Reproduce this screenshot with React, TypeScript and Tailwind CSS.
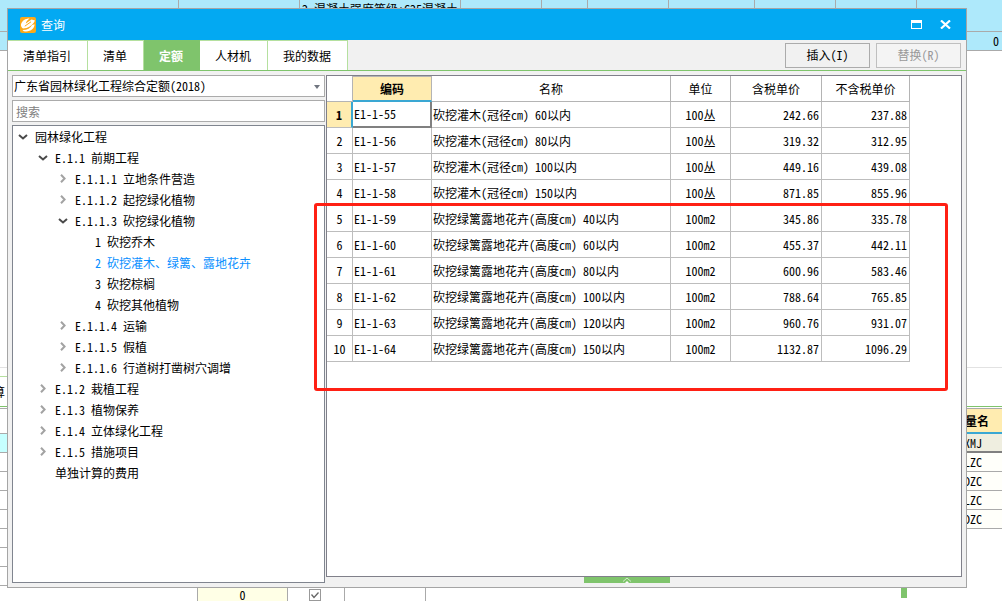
import React, { useState } from "react";
import clsx from "clsx";

type TreeItem = {
  label: string;
  level: number;
  state?: "open" | "closed";
};

const tabs = ["清单指引", "清单", "定额", "人材机", "我的数据"];

const tree: TreeItem[] = [
  { label: "园林绿化工程", level: 0, state: "open" },
  { label: "E.1.1 前期工程", level: 1, state: "open" },
  { label: "E.1.1.1 立地条件营造", level: 2, state: "closed" },
  { label: "E.1.1.2 起挖绿化植物", level: 2, state: "closed" },
  { label: "E.1.1.3 砍挖绿化植物", level: 2, state: "open" },
  { label: "1 砍挖乔木", level: 3 },
  { label: "2 砍挖灌木、绿篱、露地花卉", level: 3 },
  { label: "3 砍挖棕榈", level: 3 },
  { label: "4 砍挖其他植物", level: 3 },
  { label: "E.1.1.4 运输", level: 2, state: "closed" },
  { label: "E.1.1.5 假植", level: 2, state: "closed" },
  { label: "E.1.1.6 行道树打凿树穴调增", level: 2, state: "closed" },
  { label: "E.1.2 栽植工程", level: 1, state: "closed" },
  { label: "E.1.3 植物保养", level: 1, state: "closed" },
  { label: "E.1.4 立体绿化工程", level: 1, state: "closed" },
  { label: "E.1.5 措施项目", level: 1, state: "closed" },
  { label: "单独计算的费用", level: 1 },
];

const indents = ["pl-0", "pl-5", "pl-10", "pl-15"];

const rows = [
  ["E1-1-55", "砍挖灌木(冠径㎝) 60以内", "100丛", "242.66", "237.88"],
  ["E1-1-56", "砍挖灌木(冠径㎝) 80以内", "100丛", "319.32", "312.95"],
  ["E1-1-57", "砍挖灌木(冠径㎝) 100以内", "100丛", "449.16", "439.08"],
  ["E1-1-58", "砍挖灌木(冠径㎝) 150以内", "100丛", "871.85", "855.96"],
  ["E1-1-59", "砍挖绿篱露地花卉(高度㎝) 40以内", "100m2", "345.86", "335.78"],
  ["E1-1-60", "砍挖绿篱露地花卉(高度㎝) 60以内", "100m2", "455.37", "442.11"],
  ["E1-1-61", "砍挖绿篱露地花卉(高度㎝) 80以内", "100m2", "600.96", "583.46"],
  ["E1-1-62", "砍挖绿篱露地花卉(高度㎝) 100以内", "100m2", "788.64", "765.85"],
  ["E1-1-63", "砍挖绿篱露地花卉(高度㎝) 120以内", "100m2", "960.76", "931.07"],
  ["E1-1-64", "砍挖绿篱露地花卉(高度㎝) 150以内", "100m2", "1132.87", "1096.29"],
];

const Chevron = ({ state }: { state: "open" | "closed" }) =>
  state === "open" ? (
    <svg width="10" height="6" viewBox="0 0 10 6" fill="none">
      <path d="M1 1l4 3.5L9 1" stroke="#4a4a4a" strokeWidth="2" />
    </svg>
  ) : (
    <svg width="6" height="9" viewBox="0 0 6 9" fill="none">
      <path d="M1 .7l3.6 3.8L1 8.3" stroke="#a3a3a3" strokeWidth="2" />
    </svg>
  );

const Logo = () => (
  <svg width="16" height="16" viewBox="0 0 16 16" fill="none">
    <rect width="16" height="16" rx="2" fill="#fba919" />
    <path
      d="M1 7.500C2 3.500 5.500 1.500 9.500 1.500 7.500 3 6 4.800 5.800 6.600L11.500 2.600 15 3.400C13.500 6.800 10.500 9.600 6.500 11L3 11.500C1.600 10.600.8 9.200 1 7.500z"
      fill="#fff"
    />
    <path
      d="M14.500 7.200c.2 4-3.500 7-8.300 7.300-1.800 0-3-.5-3.600-1.500C7.400 13 10.600 11 12 8z"
      fill="#fff"
    />
    <path d="M4.800 9.200L11 4.800" stroke="#fba919" />
  </svg>
);

const TitleBar = () => (
  <header className="flex h-[31px] shrink-0 items-center bg-[#03a9f2] pr-[15px] pl-3 text-white">
    <Logo />
    <h1 className="flex-1 pl-[5px]">查询</h1>
    <div className="flex items-center gap-[18px]">
      <button aria-label="最大化">
        <svg width="11" height="9" viewBox="0 0 11 9">
          <path d="M0 0h11v9H0zM1 3v5h9V3z" fill="#fff" fillRule="evenodd" />
        </svg>
      </button>
      <button aria-label="关闭">
        <svg width="11" height="9" viewBox="0 0 11 9">
          <path d="M1 .5l9 8M10 .5l-9 8" stroke="#fff" strokeWidth="2.200" />
        </svg>
      </button>
    </div>
  </header>
);

const TabBar = () => {
  const [active, setActive] = useState("定额");

  return (
    <div className="flex h-[31px] shrink-0 items-stretch border-b border-[#7fc46c]">
      <nav className="flex">
        {tabs.map((tab) => (
          <button
            key={tab}
            onClick={() => setActive(tab)}
            className={clsx(
              "border-t border-r px-[15px] pr-4 whitespace-nowrap",
              tab === active
                ? "border-[#7fc46c] bg-[#7fc46c] font-bold text-white"
                : "border-[#b5e09f] bg-white"
            )}
          >
            {tab}
          </button>
        ))}
      </nav>
      <div className="flex flex-1 items-center justify-end gap-[6px] pr-[5px]">
        <button className="h-[25px] w-[85px] border border-[#ababab] bg-[#f1f1f1]">
          插入(I)
        </button>
        <button
          disabled
          className="h-[25px] w-[85px] border border-[#bfbfbf] bg-[#f4f4f4] text-[#999]"
        >
          替换(R)
        </button>
      </div>
    </div>
  );
};

const Sidebar = () => (
  <aside className="flex w-[313px] shrink-0 flex-col gap-[3px]">
    <div className="relative">
      <select
        aria-label="定额库"
        className="h-[22px] w-full appearance-none border border-[#ababab] bg-white pl-px"
      >
        <option>广东省园林绿化工程综合定额(2018)</option>
      </select>
      <svg
        className="pointer-events-none absolute top-[10px] right-[5px]"
        width="6"
        height="4"
        viewBox="0 0 6 4"
      >
        <path d="M0 0h6L3 4z" fill="#70757f" />
      </svg>
    </div>
    <input
      type="text"
      aria-label="搜索"
      placeholder="搜索"
      className="h-[22px] w-full border border-[#ababab] bg-white px-[3px] placeholder:text-[#808080]"
    />
    <ul className="flex-1 border border-[#80858f] bg-white">
      {tree.map((item) => (
        <li
          key={item.label}
          className={clsx(
            "flex h-[21px] items-center gap-[2px] whitespace-nowrap",
            indents[item.level],
            item.label.startsWith("2 ") && "text-[#0a8fff]"
          )}
        >
          <span className="flex w-5 justify-center">
            {item.state && <Chevron state={item.state} />}
          </span>
          {item.label}
        </li>
      ))}
    </ul>
  </aside>
);

const QuotaTable = () => (
  <table className="w-[583px] table-fixed border-separate border-spacing-0">
    <colgroup>
      <col className="w-[26px]" />
      <col className="w-[79px]" />
      <col className="w-[239px]" />
      <col className="w-[60px]" />
      <col className="w-[91px]" />
      <col className="w-[88px]" />
    </colgroup>
    <thead>
      <tr className="*:h-[26px] *:border-[#b4b4b4] *:p-0 *:font-normal">
        <td className="border-r border-b" />
        <th className="border-t border-r border-b-2 border-b-[#3aa7d3]! bg-[#ffecb0] font-bold!">
          编码
        </th>
        <th className="border-r border-b">名称</th>
        <th className="border-r border-b">单位</th>
        <th className="border-r border-b">含税单价</th>
        <th className="border-r border-b">不含税单价</th>
      </tr>
    </thead>
    <tbody>
      {rows.map(([code, name, unit, taxed, untaxed], i) => (
        <tr
          key={code}
          className="*:h-[26px] *:border-[#bdbdbd] *:py-0 *:whitespace-nowrap"
        >
          <th
            className={clsx(
              "border-b px-0",
              i === 0
                ? "border-r-2 border-r-[#3aa7d3]! bg-[#ffecb0] font-bold"
                : "border-r font-normal"
            )}
          >
            {i + 1}
          </th>
          <td
            className={clsx(
              "px-px",
              i === 0
                ? "border-r-2 border-b-2 border-[#808080]!"
                : "border-r border-b"
            )}
          >
            {code}
          </td>
          <td className="border-r border-b px-px">{name}</td>
          <td className="border-r border-b px-0 text-center">{unit}</td>
          <td className="border-r border-b px-[2px] text-right">{taxed}</td>
          <td className="border-r border-b px-[2px] text-right">{untaxed}</td>
        </tr>
      ))}
    </tbody>
  </table>
);

const QueryDialog = () => (
  <section className="absolute top-2 right-[35px] bottom-[13px] left-[7px] flex flex-col border border-[#a5a5a5] bg-[#f1f1f1]">
    <TitleBar />
    <TabBar />
    <div className="flex min-h-0 flex-1 gap-px px-1 pt-1">
      <div className="flex pb-1">
        <Sidebar />
      </div>
      <main className="flex min-w-0 flex-1 flex-col">
        <div className="flex-1 border border-[#80808a] bg-white">
          <QuotaTable />
        </div>
        <div className="flex h-[10px] justify-center pr-[34px]">
          <button
            aria-label="展开"
            className="flex h-[6px] w-[86px] justify-center bg-[#7fc46c]"
          >
            <svg width="10" height="6" viewBox="0 0 10 6" fill="none">
              <path d="M1 4.500L5 1l4 3.500" stroke="#d5edcd" />
              <path d="M3 6l2-2 2 2z" fill="#fff" />
            </svg>
          </button>
        </div>
      </main>
    </div>
    {/* highlighted range */}
    <div className="pointer-events-none absolute top-[194px] right-[18px] left-[306px] h-[188px] rounded-[3px] border-3 border-[#ff2014]" />
  </section>
);

const MainWindow = () => (
  <div className="flex h-screen min-h-[480px] flex-col bg-white">
    <div className="h-[51px] shrink-0 bg-[#aee9fb]">
      <div className="flex h-8 overflow-hidden border-b border-[#aaa] *:shrink-0 *:border-r *:border-[#aaa]">
        <div className="w-[179px]" />
        <div className="w-[121px]" />
        <div className="flex w-[161px] flex-col justify-end pb-[14px] pl-[2px] whitespace-nowrap">
          <p>1.混凝土种类</p>
          <p>2.混凝土强度等级:C25混凝土</p>
        </div>
        <div className="w-[81px]" />
        <div className="w-[46px]" />
        <div className="w-[81px]" />
        <div className="w-[86px]" />
        <div className="w-[81px]" />
        <div className="w-[81px]" />
      </div>
      <div className="flex h-[19px] items-center justify-end border-b border-[#aaa] pr-[3px]">
        0
      </div>
    </div>
    <div className="flex-1" />
    <div className="flex h-[221px] shrink-0 justify-between border-t border-[#e2e2e2]">
      <div className="w-[7px] overflow-hidden pt-2">
        <div className="flex h-[31px] items-center justify-end border-t border-b border-t-[#b5e09f] border-b-[#7fc46c] pr-[2px] whitespace-nowrap">
          计算
        </div>
        <div className="mt-px h-[26px] border-t border-b border-[#aaa]" />
        <div className="h-[19px] border-b border-[#aaa] bg-[#c6ffff]" />
        {[1, 2, 3, 4, 5, 6, 7].map((n) => (
          <div key={n} className="h-[19px] border-b border-[#aaa]" />
        ))}
      </div>
      <div className="w-[41px] overflow-hidden pt-[38px] *:flex *:items-center">
        <div className="h-px bg-[#7fc46c]" />
        <div className="mt-px h-[26px] justify-end border-t border-b-2 border-t-[#aaa] border-b-[#3aa7d3] bg-[#ffecb0] pr-[13px] font-bold whitespace-nowrap">
          变量名
        </div>
        <div className="h-[19px] border-b-2 border-[#808080] bg-[#efeee0] pl-[3px]">
          XMJ
        </div>
        {["LZC", "DZC", "LZC", "DZC"].map((name, i) => (
          <div
            key={i}
            className="h-[19px] border-b border-[#aaa] bg-[#fffffa] pl-[3px]"
          >
            {name}
          </div>
        ))}
      </div>
    </div>
    <div className="flex h-[13px] shrink-0 *:shrink-0 *:border-r *:border-[#aaa]">
      <div className="w-[198px]" />
      <div className="flex w-[90px] items-center justify-center bg-[#ffffe6]">
        <span className="leading-3">0</span>
      </div>
      <div className="flex w-[57px] items-center justify-center pr-[2px]">
        <label className="relative flex">
          <input
            type="checkbox"
            aria-label="选择"
            defaultChecked
            className="size-3 appearance-none border border-[#999] bg-white"
          />
          <svg
            className="pointer-events-none absolute inset-0"
            width="12"
            height="12"
            viewBox="0 0 12 12"
            fill="none"
          >
            <path d="M2.500 5.500L5 8.500l4.500-5" stroke="#666" strokeWidth="1.300" />
          </svg>
        </label>
      </div>
      <div className="w-[81px]" />
      <div className="w-[475px] border-r-0!" />
      <div className="h-[10px] w-[6px] border-r-0! bg-[#7fc46c]" />
    </div>
  </div>
);

const App = () => {
  return (
    <div className="relative overflow-hidden font-['Noto_Sans_CJK_SC',sans-serif] text-[12px] leading-4 text-black [font-feature-settings:'hwid']">
      <MainWindow />
      <QueryDialog />
    </div>
  );
};

export default App;
